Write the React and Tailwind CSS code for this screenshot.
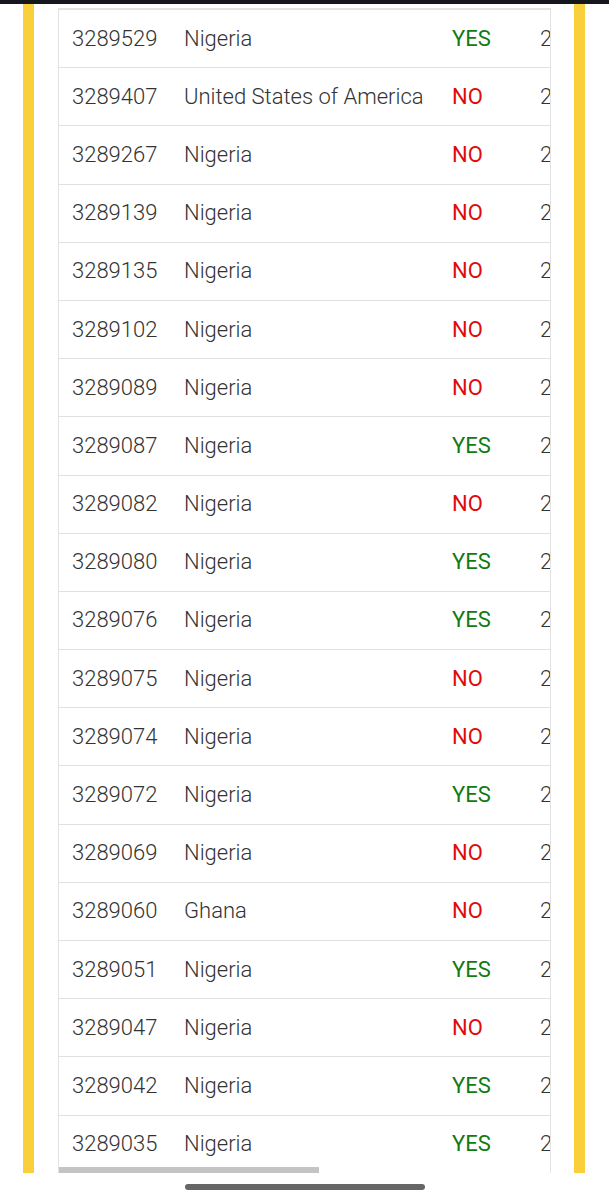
import React from "react";

const rows = [
  ["3289529", "Nigeria", true],
  ["3289407", "United States of America", false],
  ["3289267", "Nigeria", false],
  ["3289139", "Nigeria", false],
  ["3289135", "Nigeria", false],
  ["3289102", "Nigeria", false],
  ["3289089", "Nigeria", false],
  ["3289087", "Nigeria", true],
  ["3289082", "Nigeria", false],
  ["3289080", "Nigeria", true],
  ["3289076", "Nigeria", true],
  ["3289075", "Nigeria", false],
  ["3289074", "Nigeria", false],
  ["3289072", "Nigeria", true],
  ["3289069", "Nigeria", false],
  ["3289060", "Ghana", false],
  ["3289051", "Nigeria", true],
  ["3289047", "Nigeria", false],
  ["3289042", "Nigeria", true],
  ["3289035", "Nigeria", true],
];

const App = () => {
  return (
    <div
      className="w-[609px] h-[1199px] bg-white flex flex-col overflow-hidden"
      style={{ fontFamily: "Roboto, 'Liberation Sans', sans-serif" }}
    >
      <div className="h-[4px] bg-[#16161d] shrink-0" />

      <div className="flex h-[1169px] shrink-0">
        <div className="w-[23px] shrink-0" />
        <div className="w-[11px] bg-[#f9cf3c] shrink-0" />
        <div className="w-[24px] shrink-0" />

        {/* Table */}
        <div className="w-[493px] shrink-0 pt-[4px] flex flex-col">
          <div className="relative flex-1 overflow-hidden border-x border-[#e2e2e2] border-t-2 border-t-[#e4e4e4]">
            {rows.map((row, index) => (
              <div
                key={index}
                className="h-[58.2px] flex items-center border-b border-[#e0e0e0] text-[22px] leading-none"
              >
                <div className="w-[113px] shrink-0 pl-[13px] font-light text-[#333]">
                  {row[0]}
                </div>
                <div className="w-[268px] shrink-0 pl-[12px] font-light text-[#333] whitespace-nowrap">
                  {row[1]}
                </div>
                <div
                  className={
                    row[2]
                      ? "w-[88px] shrink-0 pl-[12px] text-[#117a11]"
                      : "w-[88px] shrink-0 pl-[12px] text-[#e00b0b]"
                  }
                >
                  {row[2] ? "YES" : "NO"}
                </div>
                <div className="shrink-0 pl-[12px] font-light text-[#333]">2</div>
              </div>
            ))}
            {/* horizontal scrollbar thumb */}
            <div className="absolute left-0 bottom-0 w-[260px] h-[6px] bg-[#c4c4c4]" />
          </div>
        </div>

        <div className="w-[23px] shrink-0" />
        <div className="w-[11px] bg-[#f9cf3c] shrink-0" />
      </div>

      <div className="flex justify-center pt-[11px]">
        <div className="w-[240px] h-[6px] rounded-full bg-[#666]" />
      </div>
    </div>
  );
};

export default App;
